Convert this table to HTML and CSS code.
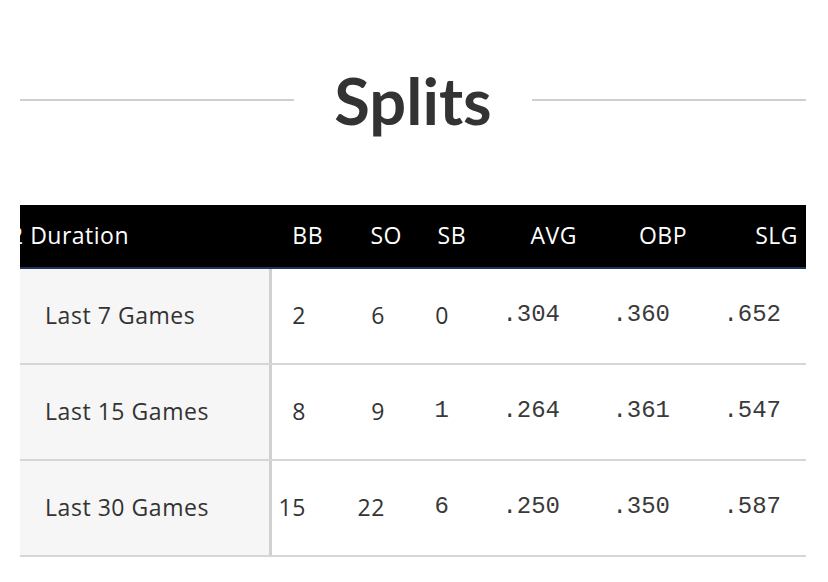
FILE: index.html
```html
<!DOCTYPE html>
<html>
<head>
<meta charset="utf-8">
<link rel="stylesheet" href="styles.css">
</head>
<body>
<div class="page">
  <div class="title-row">
    <div class="rule"></div>
    <h2 class="title">Splits</h2>
    <div class="rule"></div>
  </div>
  <div class="table">
    <div class="row head">
      <div class="cell first"><span class="clip">2 Duration</span></div>
      <div class="cell">BB</div>
      <div class="cell">SO</div>
      <div class="cell">SB</div>
      <div class="cell">AVG</div>
      <div class="cell">OBP</div>
      <div class="cell">SLG</div>
    </div>
    <div class="row body">
      <div class="cell first">Last 7 Games</div>
      <div class="cell">2</div>
      <div class="cell">6</div>
      <div class="cell">0</div>
      <div class="cell mono">.304</div>
      <div class="cell mono">.360</div>
      <div class="cell mono">.652</div>
    </div>
    <div class="row body">
      <div class="cell first">Last 15 Games</div>
      <div class="cell">8</div>
      <div class="cell">9</div>
      <div class="cell mono">1</div>
      <div class="cell mono">.264</div>
      <div class="cell mono">.361</div>
      <div class="cell mono">.547</div>
    </div>
    <div class="row body">
      <div class="cell first">Last 30 Games</div>
      <div class="cell">15</div>
      <div class="cell">22</div>
      <div class="cell mono">6</div>
      <div class="cell mono">.250</div>
      <div class="cell mono">.350</div>
      <div class="cell mono">.587</div>
    </div>
  </div>
</div>
</body>
</html>
```
FILE: styles.css
```css
html, body {
  margin: 0;
  padding: 0;
  background: #fff;
}
.page {
  padding: 0 22px 0 20px;
  font-family: "Open Sans", "Liberation Sans", sans-serif;
  color: #333;
}
.title-row {
  display: flex;
  align-items: center;
  gap: 40px;
  height: 200px;
  margin-bottom: 5px;
}
.rule {
  flex: 1;
  height: 2px;
  background: #cfcfcf;
}
.title {
  margin: 0;
  font-family: "Lato", sans-serif;
  font-size: 65px;
  font-weight: 700;
  color: #333;
  line-height: 1;
}
.table {
  width: 786px;
}
.row {
  display: grid;
  grid-template-columns: 252px 59px 79px 64px 111px 110px 111px;
}
.head {
  background: #000;
  color: #fff;
  height: 62px;
  box-sizing: content-box;
  border-bottom: 2px solid #1d3461;
  align-items: center;
  font-size: 23px;
  letter-spacing: 0.5px;
  padding-bottom: 0;
}
.head .cell {
  text-align: right;
  padding: 0 8px 3px 0;
}
.head .first {
  text-align: left;
  padding: 0 0 3px 0;
  overflow: hidden;
  white-space: nowrap;
}
.clip {
  display: block;
  text-indent: -10px;
}
.body {
  height: 94px;
  border-bottom: 2px solid #d6d6d6;
  font-size: 23px;
  letter-spacing: 0.55px;
}
.body .cell {
  padding: 0 25px 3px 0;
  display: flex;
  align-items: center;
  justify-content: flex-end;
}
.body .first {
  background: #f6f6f6;
  justify-content: flex-start;
  padding: 0 0 3px 25px;
  border-right: 3px solid #d0d0d0;
}
.mono {
  font-family: "Liberation Mono", monospace;
  font-size: 24px;
  letter-spacing: 0;
  color: #3a3a3a;
}
```
